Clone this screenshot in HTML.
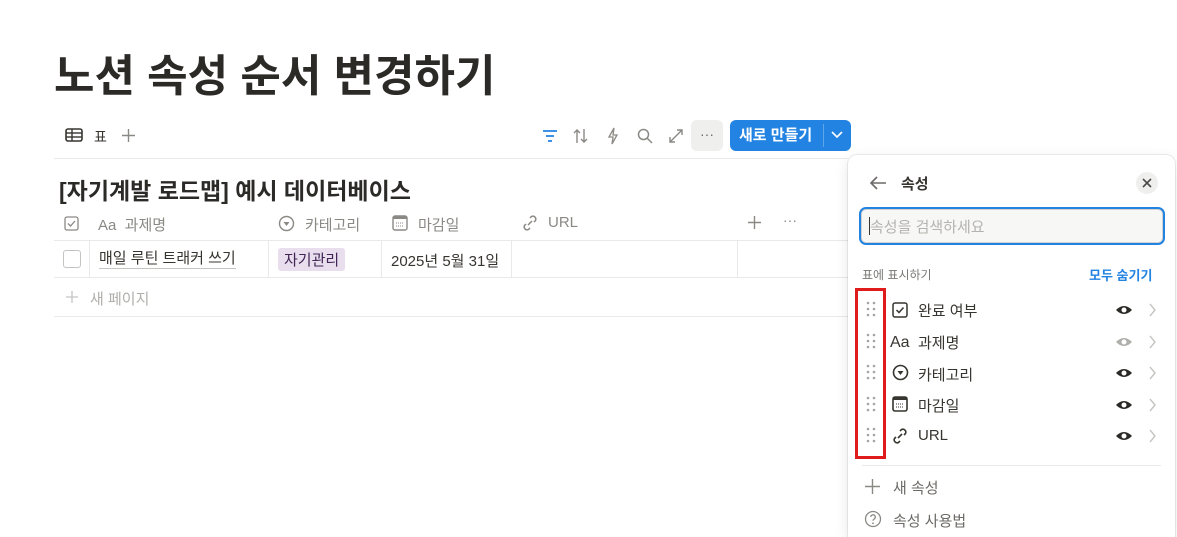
<!DOCTYPE html>
<html><head><meta charset="utf-8"><style>
*{box-sizing:border-box;margin:0;padding:0}
html,body{width:1177px;height:537px;overflow:hidden}
body{background:#fff;font-family:"Liberation Sans","Noto Sans CJK KR",sans-serif;color:#37352f;position:relative}
.a{position:absolute;white-space:nowrap}
.g{color:#8a8984}
.line{position:absolute;height:1px;background:#e9e9e7}
.vl{position:absolute;width:1px;background:#e9e9e7}
svg{position:absolute}
</style></head><body>
<div class="a" style="left:54px;top:40px;font-size:44px;font-weight:bold;color:#2b2a27">노션 속성 순서 변경하기</div>

<svg style="left:65px;top:128px" width="18" height="14" viewBox="0 0 18 14"><rect x="1" y="1" width="16" height="12" rx="2" fill="none" stroke="#37352f" stroke-width="1.6"/><line x1="1" y1="5" x2="17" y2="5" stroke="#37352f" stroke-width="1.4"/><line x1="1" y1="9" x2="17" y2="9" stroke="#37352f" stroke-width="1.4"/><line x1="7" y1="1" x2="7" y2="13" stroke="#37352f" stroke-width="1.4"/></svg>
<div class="a" style="left:94px;top:127px;font-size:14px">표</div>
<svg style="left:122px;top:129px" width="13" height="13"><path d="M6.5 0v13M0 6.5h13" stroke="#8a8984" stroke-width="1.4"/></svg>
<svg style="left:542px;top:129px" width="16" height="14"><path d="M1 2h14M4 7h8M6 12h4" stroke="#2383e2" stroke-width="1.8"/></svg>
<svg style="left:572px;top:127px" width="18" height="18"><path d="M5 3v13M2 6l3-3 3 3M12 2v13M9 12l3 3 3-3" stroke="#8a8984" stroke-width="1.4" fill="none"/></svg>
<svg style="left:606px;top:127px" width="14" height="18"><path d="M8 1L3 10h4l-1 7 5-9H7z" stroke="#8a8984" stroke-width="1.3" fill="none"/></svg>
<svg style="left:636px;top:127px" width="18" height="18"><circle cx="7.5" cy="7.5" r="5" stroke="#8a8984" stroke-width="1.5" fill="none"/><path d="M11 11l5 5" stroke="#8a8984" stroke-width="1.5"/></svg>
<svg style="left:668px;top:128px" width="16" height="16"><path d="M2 14L14 2M9 2h5v5M2 9v5h5" stroke="#8a8984" stroke-width="1.4" fill="none"/></svg>
<div class="a" style="left:691px;top:120px;width:32px;height:31px;background:#efefed;border-radius:6px;text-align:center;font-size:14px;line-height:28px;color:#6b6a66">···</div>
<div class="a" style="left:730px;top:120px;width:121px;height:31px;background:#2383e2;border-radius:6px;color:#fff;font-size:15px;font-weight:bold;line-height:31px;padding-left:9px">새로 만들기</div>
<div class="a" style="left:823px;top:124px;width:1px;height:23px;background:#5fa5ea"></div>
<svg style="left:831px;top:130px" width="12" height="10"><path d="M1 2l5 5 5-5" stroke="#fff" stroke-width="1.6" fill="none"/></svg>
<div class="line" style="left:54px;top:158px;width:794px"></div>

<div class="a" style="left:59px;top:172px;font-size:23px;font-weight:bold;color:#2b2a27">[자기계발 로드맵] 예시 데이터베이스</div>

<svg style="left:64px;top:216px" width="15" height="15"><rect x="1" y="1" width="13" height="13" rx="2" fill="none" stroke="#8a8984" stroke-width="1.3"/><path d="M4 7.5l2.5 2.5 4.5-5" stroke="#8a8984" stroke-width="1.3" fill="none"/></svg>
<div class="a g" style="left:98px;top:214px;font-size:15px">Aa&nbsp; 과제명</div>
<svg style="left:278px;top:215px" width="17" height="17"><circle cx="8.5" cy="8.5" r="7" stroke="#8a8984" stroke-width="1.4" fill="none"/><path d="M5.5 7h6l-3 4z" fill="#8a8984"/></svg>
<div class="a g" style="left:305px;top:214px;font-size:15px">카테고리</div>
<svg style="left:392px;top:215px" width="16" height="16"><rect x="1" y="1" width="14" height="14" rx="2" fill="none" stroke="#8a8984" stroke-width="1.4"/><rect x="1" y="1" width="14" height="3" fill="#8a8984"/><path d="M4 8h8M4 11h8" stroke="#8a8984" stroke-dasharray="1 1"/></svg>
<div class="a g" style="left:418px;top:214px;font-size:15px">마감일</div>
<svg style="left:521px;top:214px" width="18" height="18"><path d="M7 11l4-4M9 4l1.5-1.5a3 3 0 014 4L13 8M9 14l-1.5 1.5a3 3 0 01-4-4L5 10" stroke="#8a8984" stroke-width="1.5" fill="none"/></svg>
<div class="a g" style="left:548px;top:214px;font-size:15px">URL</div>
<svg style="left:748px;top:216px" width="13" height="13"><path d="M6.5 0v13M0 6.5h13" stroke="#8a8984" stroke-width="1.4"/></svg>
<div class="a g" style="left:783px;top:212px;font-size:14px">···</div>
<div class="line" style="left:54px;top:240px;width:794px"></div>

<div class="a" style="left:63px;top:250px;width:18px;height:18px;border:1.3px solid #c5c4c0;border-radius:3px"></div>
<div class="vl" style="left:89px;top:240px;height:37px"></div>
<div class="a" style="left:99px;top:250px;font-size:15px;border-bottom:1px solid #c5c4c0;line-height:18px">매일 루틴 트래커 쓰기</div>
<div class="vl" style="left:268px;top:240px;height:37px"></div>
<div class="a" style="left:278px;top:248px;background:#e8deee;border-radius:3px;padding:1px 6px;font-size:15px;color:#412454">자기관리</div>
<div class="vl" style="left:381px;top:240px;height:37px"></div>
<div class="a" style="left:391px;top:250px;font-size:15px">2025년 5월 31일</div>
<div class="vl" style="left:511px;top:240px;height:37px"></div>
<div class="vl" style="left:737px;top:240px;height:37px"></div>
<div class="line" style="left:54px;top:277px;width:794px"></div>
<svg style="left:66px;top:291px" width="12" height="12"><path d="M6 0v12M0 6h12" stroke="#c5c4c0" stroke-width="1.3"/></svg>
<div class="a" style="left:90px;top:288px;font-size:15px;color:#b0afab">새 페이지</div>
<div class="line" style="left:54px;top:316px;width:794px"></div>

<div class="a" style="left:848px;top:155px;width:327px;height:382px;background:#fff;border-radius:9px 9px 0 0;box-shadow:0 0 0 1px rgba(15,15,15,.07),0 4px 14px rgba(15,15,15,.1)"></div>
<svg style="left:869px;top:175px" width="18" height="16"><path d="M17 8H2M8 2L2 8l6 6" stroke="#6b6a66" stroke-width="1.6" fill="none"/></svg>
<div class="a" style="left:901px;top:173px;font-size:15px;font-weight:bold">속성</div>
<div class="a" style="left:1136px;top:172px;width:22px;height:22px;background:#efefed;border-radius:50%"></div>
<svg style="left:1141px;top:177px" width="12" height="12"><path d="M2 2l8 8M10 2l-8 8" stroke="#4a4945" stroke-width="1.6"/></svg>
<div class="a" style="left:859px;top:207px;width:306px;height:38px;border:2px solid #2383e2;border-radius:7px;background:#f7f7f5;box-shadow:inset 0 0 0 1px #d3d2ce"></div>
<div class="a" style="left:869px;top:217px;width:1px;height:18px;background:#37352f"></div>
<div class="a" style="left:870px;top:216px;font-size:15px;color:#b4b3af">속성을 검색하세요</div>
<div class="a" style="left:862px;top:266px;font-size:12px;color:#7a7975">표에 표시하기</div>
<div class="a" style="left:1089px;top:265px;font-size:13px;color:#2383e2;font-weight:bold">모두 숨기기</div>

<div class="a" style="left:855px;top:288px;width:31px;height:171px;border:3px solid #e01b1b"></div>

<div class="a" style="left:918px;top:300px;font-size:15px">완료 여부</div>
<div class="a" style="left:918px;top:332px;font-size:15px">과제명</div>
<div class="a" style="left:918px;top:364px;font-size:15px">카테고리</div>
<div class="a" style="left:918px;top:395px;font-size:15px">마감일</div>
<div class="a" style="left:918px;top:427px;font-size:15px">URL</div>
<svg style="left:892px;top:302px" width="16" height="16"><rect x="1" y="1" width="14" height="14" rx="2" fill="none" stroke="#37352f" stroke-width="1.5"/><path d="M4.5 8l2.5 2.5 4.5-5" stroke="#37352f" stroke-width="1.5" fill="none"/></svg>
<div class="a" style="left:890px;top:334px;font-size:16px">Aa</div>
<svg style="left:892px;top:364px" width="17" height="17"><circle cx="8.5" cy="8.5" r="7" stroke="#37352f" stroke-width="1.6" fill="none"/><path d="M5.5 7h6l-3 4z" fill="#37352f"/></svg>
<svg style="left:892px;top:396px" width="16" height="16"><rect x="1" y="1" width="14" height="14" rx="2" fill="none" stroke="#37352f" stroke-width="1.6"/><rect x="1" y="1" width="14" height="3" fill="#37352f"/><path d="M4 8h8M4 11h8" stroke="#37352f" stroke-dasharray="1 1"/></svg>
<svg style="left:891px;top:427px" width="18" height="18"><path d="M7 11l4-4M9 4l1.5-1.5a3 3 0 014 4L13 8M9 14l-1.5 1.5a3 3 0 01-4-4L5 10" stroke="#37352f" stroke-width="1.6" fill="none"/></svg>

<svg style="left:866px;top:300px" width="12" height="150">
<g fill="#a5a4a0">
<circle cx="2" cy="3" r="1.3"/><circle cx="8" cy="3" r="1.3"/><circle cx="2" cy="9" r="1.3"/><circle cx="8" cy="9" r="1.3"/><circle cx="2" cy="15" r="1.3"/><circle cx="8" cy="15" r="1.3"/>
<circle cx="2" cy="35" r="1.3"/><circle cx="8" cy="35" r="1.3"/><circle cx="2" cy="41" r="1.3"/><circle cx="8" cy="41" r="1.3"/><circle cx="2" cy="47" r="1.3"/><circle cx="8" cy="47" r="1.3"/>
<circle cx="2" cy="66" r="1.3"/><circle cx="8" cy="66" r="1.3"/><circle cx="2" cy="72" r="1.3"/><circle cx="8" cy="72" r="1.3"/><circle cx="2" cy="78" r="1.3"/><circle cx="8" cy="78" r="1.3"/>
<circle cx="2" cy="98" r="1.3"/><circle cx="8" cy="98" r="1.3"/><circle cx="2" cy="104" r="1.3"/><circle cx="8" cy="104" r="1.3"/><circle cx="2" cy="110" r="1.3"/><circle cx="8" cy="110" r="1.3"/>
<circle cx="2" cy="129" r="1.3"/><circle cx="8" cy="129" r="1.3"/><circle cx="2" cy="135" r="1.3"/><circle cx="8" cy="135" r="1.3"/><circle cx="2" cy="141" r="1.3"/><circle cx="8" cy="141" r="1.3"/>
</g></svg>

<svg style="left:1114px;top:300px" width="50" height="150">
<g>
<path d="M2 10Q10 2 18 10Q10 18 2 10z" fill="#2b2a27"/><circle cx="10" cy="10" r="2.5" fill="#fff"/>
<path d="M2 42Q10 34 18 42Q10 50 2 42z" fill="#b0afab"/><circle cx="10" cy="42" r="2.5" fill="#fff"/>
<path d="M2 73Q10 65 18 73Q10 81 2 73z" fill="#2b2a27"/><circle cx="10" cy="73" r="2.5" fill="#fff"/>
<path d="M2 105Q10 97 18 105Q10 113 2 105z" fill="#2b2a27"/><circle cx="10" cy="105" r="2.5" fill="#fff"/>
<path d="M2 136Q10 128 18 136Q10 144 2 136z" fill="#2b2a27"/><circle cx="10" cy="136" r="2.5" fill="#fff"/>
</g>
<g stroke="#c5c4c0" stroke-width="1.4" fill="none">
<path d="M36 4l5 6-5 6M36 36l5 6-5 6M36 67l5 6-5 6M36 99l5 6-5 6M36 130l5 6-5 6"/>
</g></svg>

<div class="line" style="left:862px;top:465px;width:299px"></div>
<svg style="left:865px;top:479px" width="15" height="15"><path d="M7.5 0v15M0 7.5h15" stroke="#8a8984" stroke-width="1.4"/></svg>
<div class="a" style="left:893px;top:477px;font-size:15px;color:#6b6a66">새 속성</div>
<svg style="left:864px;top:510px" width="18" height="18"><circle cx="9" cy="9" r="7.5" stroke="#8a8984" stroke-width="1.3" fill="none"/><path d="M6.7 7a2.3 2.3 0 114 1.6c-.8.6-1.7 1-1.7 2.2" stroke="#8a8984" stroke-width="1.3" fill="none"/><circle cx="9" cy="13.3" r=".9" fill="#8a8984"/></svg>
<div class="a" style="left:893px;top:510px;font-size:15px;color:#6b6a66">속성 사용법</div>
</body></html>
